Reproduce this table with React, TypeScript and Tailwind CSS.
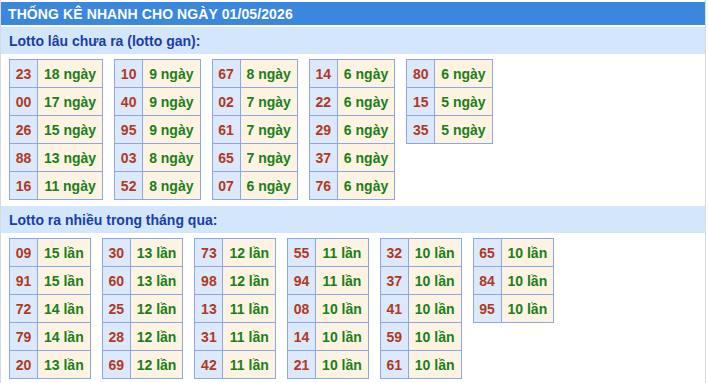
type Row = [string, string]

const ganCols: Row[][] = [
  [["23", "18 ngày"], ["00", "17 ngày"], ["26", "15 ngày"], ["88", "13 ngày"], ["16", "11 ngày"]],
  [["10", "9 ngày"], ["40", "9 ngày"], ["95", "9 ngày"], ["03", "8 ngày"], ["52", "8 ngày"]],
  [["67", "8 ngày"], ["02", "7 ngày"], ["61", "7 ngày"], ["65", "7 ngày"], ["07", "6 ngày"]],
  [["14", "6 ngày"], ["22", "6 ngày"], ["29", "6 ngày"], ["37", "6 ngày"], ["76", "6 ngày"]],
  [["80", "6 ngày"], ["15", "5 ngày"], ["35", "5 ngày"]],
]

const nhieuCols: Row[][] = [
  [["09", "15 lần"], ["91", "15 lần"], ["72", "14 lần"], ["79", "14 lần"], ["20", "13 lần"]],
  [["30", "13 lần"], ["60", "13 lần"], ["25", "12 lần"], ["28", "12 lần"], ["69", "12 lần"]],
  [["73", "12 lần"], ["98", "12 lần"], ["13", "11 lần"], ["31", "11 lần"], ["42", "11 lần"]],
  [["55", "11 lần"], ["94", "11 lần"], ["08", "10 lần"], ["14", "10 lần"], ["21", "10 lần"]],
  [["32", "10 lần"], ["37", "10 lần"], ["41", "10 lần"], ["59", "10 lần"], ["61", "10 lần"]],
  [["65", "10 lần"], ["84", "10 lần"], ["95", "10 lần"]],
]

function LotoBlock({ rows }: { rows: Row[] }) {
  return (
    <div className="border-l border-t border-[#8ea7e2]">
      {rows.map(([num, val]) => (
        <div key={num} className="flex">
          {/* number */}
          <div className="flex h-[28px] w-[28px] items-center justify-center border-b border-r border-[#8ea7e2] bg-[#dce9fa] text-[#b0391f]">
            {num}
          </div>
          {/* count */}
          <div className="flex h-[28px] flex-1 items-center justify-center whitespace-nowrap border-b border-r border-[#8ea7e2] bg-[#fdf3e2] px-[6px] text-[#1a7f1a]">
            {val}
          </div>
        </div>
      ))}
    </div>
  )
}

function Section({ title, cols }: { title: string; cols: Row[][] }) {
  return (
    <div>
      <div className="flex h-[27px] items-center bg-[#d3e6fb] pl-[8px] text-[#1b3ea6]">{title}</div>
      <div className="flex items-start gap-x-[11px] px-[8px] pb-[6px] pt-[5px]">
        {cols.map((rows, i) => (
          <LotoBlock key={i} rows={rows} />
        ))}
      </div>
    </div>
  )
}

export default function App() {
  return (
    <div
      className="h-[383px] w-[706px] border-x border-[#d4dbe3] bg-white pt-[2px] text-[14px] font-bold leading-none"
      style={{ fontFamily: '"Liberation Sans", Arial, sans-serif' }}
    >
      {/* Header */}
      <div className="flex h-[23px] items-center bg-[#3b87dd] pl-[7px] text-[14px] tracking-[0.1px] text-white">
        THỐNG KÊ NHANH CHO NGÀY 01/05/2026
      </div>

      <div className="pt-[2px]">
        <Section title="Lotto lâu chưa ra (lotto gan):" cols={ganCols} />
        <Section title="Lotto ra nhiều trong tháng qua:" cols={nhieuCols} />
      </div>
    </div>
  )
}
